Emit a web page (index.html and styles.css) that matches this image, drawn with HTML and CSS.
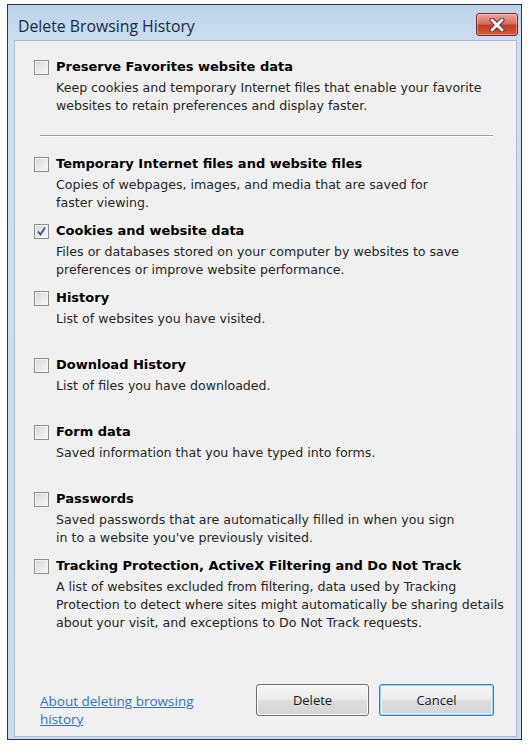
FILE: index.html
```html
<!DOCTYPE html>
<html>
<head>
<meta charset="utf-8">
<link rel="stylesheet" href="styles.css">
</head>
<body>
<div class="window">
  <div class="titlebar">
    <span class="title">Delete Browsing History</span>
    <div class="close">
      <svg width="20" height="14" viewBox="0 0 20 14">
        <path d="M5 2 L15 12 M15 2 L5 12" stroke="#5a2a22" stroke-width="5" stroke-linecap="round"/>
        <path d="M5 2 L15 12 M15 2 L5 12" stroke="#ffffff" stroke-width="3" stroke-linecap="round"/>
      </svg>
    </div>
  </div>
  <div class="client">
    <div class="item first">
      <span class="cb"></span>
      <div class="text">
        <div class="label">Preserve Favorites website data</div>
        <div class="desc">Keep cookies and temporary Internet files that enable your favorite<br>websites to retain preferences and display faster.</div>
      </div>
    </div>
    <div class="sep"></div>
    <div class="item">
      <span class="cb"></span>
      <div class="text">
        <div class="label">Temporary Internet files and website files</div>
        <div class="desc">Copies of webpages, images, and media that are saved for<br>faster viewing.</div>
      </div>
    </div>
    <div class="item">
      <span class="cb checked">
        <svg width="13" height="13" viewBox="0 0 13 13"><path d="M3 6.5 L5.5 9.5 L10 2.5" fill="none" stroke="#3f4fa0" stroke-width="1.8"/></svg>
      </span>
      <div class="text">
        <div class="label">Cookies and website data</div>
        <div class="desc">Files or databases stored on your computer by websites to save<br>preferences or improve website performance.</div>
      </div>
    </div>
    <div class="item">
      <span class="cb"></span>
      <div class="text">
        <div class="label">History</div>
        <div class="desc">List of websites you have visited.</div>
      </div>
    </div>
    <div class="item">
      <span class="cb"></span>
      <div class="text">
        <div class="label">Download History</div>
        <div class="desc">List of files you have downloaded.</div>
      </div>
    </div>
    <div class="item">
      <span class="cb"></span>
      <div class="text">
        <div class="label">Form data</div>
        <div class="desc">Saved information that you have typed into forms.</div>
      </div>
    </div>
    <div class="item">
      <span class="cb"></span>
      <div class="text">
        <div class="label">Passwords</div>
        <div class="desc">Saved passwords that are automatically filled in when you sign<br>in to a website you've previously visited.</div>
      </div>
    </div>
    <div class="item">
      <span class="cb"></span>
      <div class="text">
        <div class="label clip">Tracking Protection, ActiveX Filtering and Do Not Track data</div>
        <div class="desc">A list of websites excluded from filtering, data used by Tracking<br>Protection to detect where sites might automatically be sharing details<br>about your visit, and exceptions to Do Not Track requests.</div>
      </div>
    </div>
    <div class="footer">
      <a class="link" href="#">About deleting browsing<br>history</a>
      <div class="buttons">
        <button class="btn">Delete</button>
        <button class="btn focus">Cancel</button>
      </div>
    </div>
  </div>
</div>
</body>
</html>
```
FILE: styles.css
```css
html, body {
  margin: 0;
  padding: 0;
  background: #ffffff;
}
.window {
  margin: 4px 0 0 7px;
  width: 515px;
  height: 736px;
  box-sizing: border-box;
  border: 1px solid #2e3440;
  background: linear-gradient(180deg, #bdd2ea 0%, #cfdef0 40px, #c9daee 100%);
  display: flex;
  flex-direction: column;
  padding: 0 4px 2px 6px;
}
.titlebar {
  height: 35px;
  flex: none;
  display: flex;
  align-items: center;
  justify-content: space-between;
}
.title {
  font-family: "Open Sans", "DejaVu Sans", sans-serif;
  font-size: 15.8px;
  color: #1b2a3c;
  margin-left: 4px;
  margin-top: 7px;
}
.close {
  width: 40px;
  height: 21px;
  border: 1px solid #7b2d22;
  border-radius: 3px;
  background: linear-gradient(180deg, #e9a598 0%, #d8705f 45%, #c23a25 55%, #d65a3e 100%);
  display: flex;
  align-items: center;
  justify-content: center;
  margin-right: -1px;
  align-self: flex-start;
  margin-top: 8px;
  box-shadow: inset 0 0 0 1px rgba(255,255,255,0.35);
}
.client {
  flex: 1;
  background: #f0f0f0;
  border: 1px solid #a9bbd3;
  padding: 17px 0 0 19px;
  display: flex;
  flex-direction: column;
  font-family: "DejaVu Sans", sans-serif;
}
.item {
  height: 67px;
  display: flex;
  align-items: flex-start;
  gap: 7px;
}
.item.first {
  height: 58px;
}
.cb {
  width: 13px;
  height: 13px;
  flex: none;
  border: 1px solid #8e8f8f;
  background: linear-gradient(135deg, #d4d4d4 0%, #ececec 60%, #f8f8f8 100%);
  box-shadow: inset 0 0 0 1px #f4f4f4;
  margin-top: 2px;
  display: flex;
  align-items: center;
  justify-content: center;
}
.text {
  display: flex;
  flex-direction: column;
  gap: 3px;
}
.label {
  font-weight: bold;
  font-size: 13px;
  line-height: 18px;
  color: #000;
  white-space: nowrap;
}
.label.clip {
  width: 406px;
  overflow: hidden;
}
.desc {
  font-size: 12.6px;
  line-height: 18px;
  color: #262626;
  white-space: nowrap;
}
.sep {
  height: 1px;
  background: #a0a0a0;
  margin: 19px 23px 18px 6px;
  border-bottom: 1px solid #ffffff;
}
.footer {
  margin-top: auto;
  display: flex;
  justify-content: space-between;
  align-items: flex-start;
  padding: 0 22px 8px 6px;
}
.link {
  font-family: "Open Sans", "DejaVu Sans", sans-serif;
  font-size: 13.5px;
  line-height: 18px;
  color: #3a6fc6;
  text-decoration: underline;
  margin-top: 8px;
}
.buttons {
  display: flex;
  gap: 10px;
}
.btn {
  width: 113px;
  height: 32px;
  border: 1px solid #707070;
  border-radius: 3px;
  background: linear-gradient(180deg, #f6f6f6 0%, #ebebeb 50%, #dddddd 51%, #d4d4d4 100%);
  font-family: "Open Sans", "DejaVu Sans", sans-serif;
  font-size: 13px;
  color: #1a1a1a;
  box-shadow: inset 0 0 0 1px #fbfbfb;
  padding: 0;
}
.btn.focus {
  width: 115px;
  border-color: #3c7fb1;
  box-shadow: inset 0 0 0 1px #98d1ef, inset 0 0 0 2px #eaf6fd;
}
```
